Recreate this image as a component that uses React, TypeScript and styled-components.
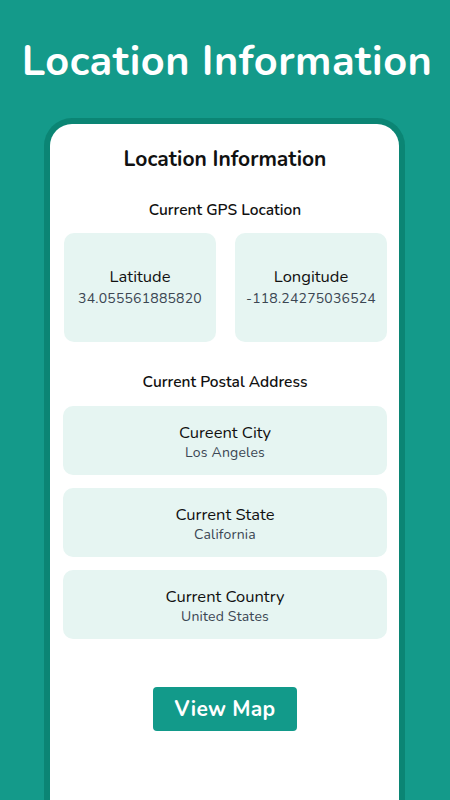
import React from "react";
import styled, { createGlobalStyle } from "styled-components";

const Global = createGlobalStyle`
  html, body { margin: 0; padding: 0; }
  body {
    background: #149a8a;
    font-family: "Nunito", Lato, "Noto Sans", sans-serif;
    overflow: hidden;
  }
`;

const Page = styled.div`
  width: 450px;
  height: 800px;
  display: flex;
  flex-direction: column;
  align-items: center;
  background: #149a8a;
  overflow: hidden;
`;

const Title = styled.h1`
  margin: 37px 0 0 4px;
  height: 81px;
  font-size: 41.5px;
  line-height: 50px;
  font-weight: 700;
  color: #ffffff;
  letter-spacing: 0.5px;
  text-align: center;
`;

const Frame = styled.div`
  box-sizing: border-box;
  width: 361px;
  margin-left: -1px;
  flex: 1;
  border: 6px solid #0b8574;
  border-bottom: none;
  border-radius: 28px 28px 0 0;
  background: #ffffff;
  display: flex;
  flex-direction: column;
  padding: 0 12px 0 13px;
`;

const Heading = styled.h2`
  margin: 23px 0 0;
  font-size: 21px;
  line-height: 24px;
  font-weight: 700;
  color: #111111;
  text-align: center;
`;

const SectionLabel = styled.h3<{ $top: number }>`
  margin: ${(p) => p.$top}px 0 0;
  font-size: 15.5px;
  line-height: 20px;
  font-weight: 600;
  color: #111111;
  text-align: center;
`;

const CoordGrid = styled.div`
  display: grid;
  grid-template-columns: 152px 152px;
  justify-content: space-between;
  margin: 13px 0 0 1px;
`;

const CoordCard = styled.div`
  height: 109px;
  border-radius: 10px;
  background: #e6f5f2;
  display: flex;
  flex-direction: column;
  align-items: center;
  justify-content: center;
  padding-bottom: 2px;
  box-sizing: border-box;
`;

const AddressList = styled.div`
  display: flex;
  flex-direction: column;
  gap: 13px;
  margin-top: 14px;
`;

const AddressCard = styled.div`
  height: 69px;
  border-radius: 10px;
  background: #e6f5f2;
  display: flex;
  flex-direction: column;
  align-items: center;
  justify-content: center;
  padding-top: 3px;
  box-sizing: border-box;
`;

const Label = styled.div`
  font-size: 16.5px;
  line-height: 21px;
  color: #111111;
`;

const Value = styled.div<{ $gap: number }>`
  margin-top: ${(p) => p.$gap}px;
  font-size: 14px;
  line-height: 19px;
  color: #3b4652;
  letter-spacing: 0.2px;
`;

const ButtonRow = styled.div`
  display: flex;
  justify-content: center;
  margin-top: 48px;
`;

const MapButton = styled.button`
  width: 144px;
  height: 44px;
  border: none;
  border-radius: 4px;
  background: #129a8a;
  color: #ffffff;
  font-family: inherit;
  font-size: 21px;
  font-weight: 700;
  letter-spacing: 0.3px;
  cursor: pointer;
`;

const addresses = [
  { label: "Cureent City", value: "Los Angeles" },
  { label: "Current State", value: "California" },
  { label: "Current Country", value: "United States" },
];

export default function App() {
  return (
    <>
      <Global />
      <Page>
        <Title>Location Information</Title>
        <Frame>
          <Heading>Location Information</Heading>
          <SectionLabel $top={29}>Current GPS Location</SectionLabel>
          <CoordGrid>
            <CoordCard>
              <Label>Latitude</Label>
              <Value $gap={2}>34.055561885820</Value>
            </CoordCard>
            <CoordCard>
              <Label>Longitude</Label>
              <Value $gap={2}>-118.24275036524</Value>
            </CoordCard>
          </CoordGrid>
          <SectionLabel $top={30}>Current Postal Address</SectionLabel>
          <AddressList>
            {addresses.map((a) => (
              <AddressCard key={a.label}>
                <Label>{a.label}</Label>
                <Value $gap={0}>{a.value}</Value>
              </AddressCard>
            ))}
          </AddressList>
          <ButtonRow>
            <MapButton>View Map</MapButton>
          </ButtonRow>
        </Frame>
      </Page>
    </>
  );
}
